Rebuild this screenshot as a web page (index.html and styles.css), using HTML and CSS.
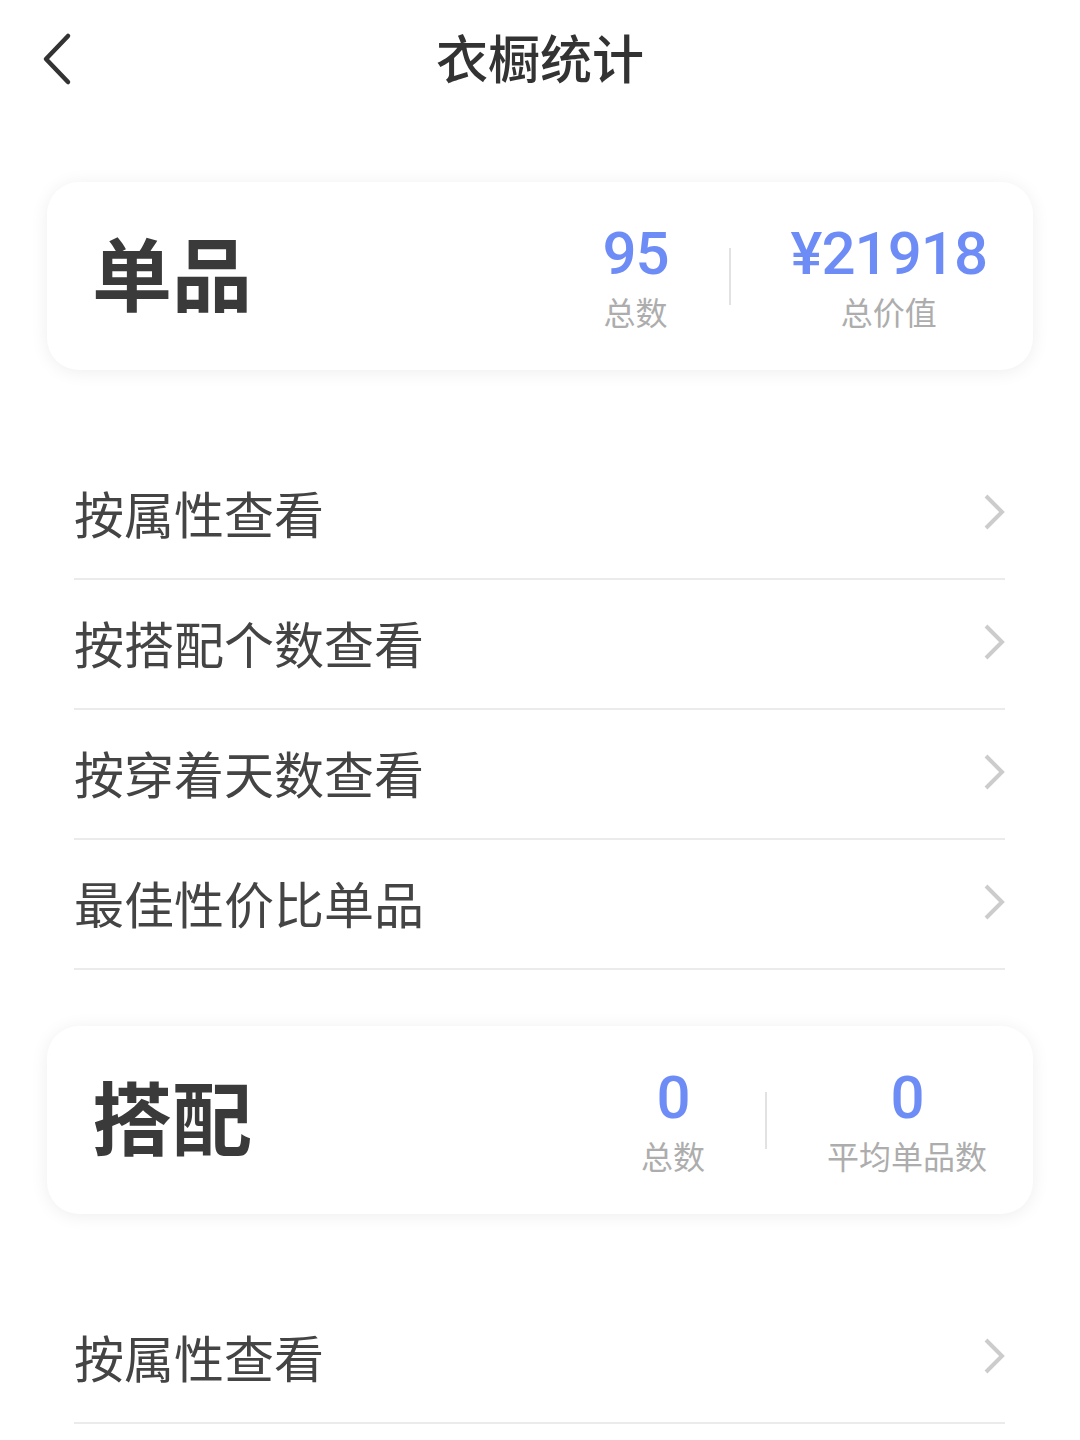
FILE: index.html
```html
<!DOCTYPE html>
<html lang="zh-CN">
<head>
<meta charset="utf-8">
<title>衣橱统计</title>
<link rel="stylesheet" href="styles.css">
</head>
<body>
<header class="header">
  <div class="back">
    <svg width="34" height="54" viewBox="0 0 34 54"><polyline points="28,4 6,27 28,50" fill="none" stroke="#333" stroke-width="4.5" stroke-linecap="round" stroke-linejoin="round"/></svg>
  </div>
  <h1 class="title">衣橱统计</h1>
  <div></div>
</header>
<main class="page">
  <section class="card">
    <div class="card-title">单品</div>
    <div class="stats">
      <div class="stat"><div class="num">95</div><div class="label">总数</div></div>
      <div class="sep"></div>
      <div class="stat"><div class="num">¥21918</div><div class="label">总价值</div></div>
    </div>
  </section>
  <ul class="list">
    <li class="row"><span>按属性查看</span><svg class="chev" width="26" height="40" viewBox="0 0 26 40"><polyline points="5,4 21,20 5,36" fill="none" stroke="#cccccc" stroke-width="4"/></svg></li>
    <li class="row"><span>按搭配个数查看</span><svg class="chev" width="26" height="40" viewBox="0 0 26 40"><polyline points="5,4 21,20 5,36" fill="none" stroke="#cccccc" stroke-width="4"/></svg></li>
    <li class="row"><span>按穿着天数查看</span><svg class="chev" width="26" height="40" viewBox="0 0 26 40"><polyline points="5,4 21,20 5,36" fill="none" stroke="#cccccc" stroke-width="4"/></svg></li>
    <li class="row"><span>最佳性价比单品</span><svg class="chev" width="26" height="40" viewBox="0 0 26 40"><polyline points="5,4 21,20 5,36" fill="none" stroke="#cccccc" stroke-width="4"/></svg></li>
  </ul>
  <section class="card card2">
    <div class="card-title">搭配</div>
    <div class="stats">
      <div class="stat"><div class="num">0</div><div class="label">总数</div></div>
      <div class="sep"></div>
      <div class="stat"><div class="num">0</div><div class="label">平均单品数</div></div>
    </div>
  </section>
  <ul class="list">
    <li class="row"><span>按属性查看</span><svg class="chev" width="26" height="40" viewBox="0 0 26 40"><polyline points="5,4 21,20 5,36" fill="none" stroke="#cccccc" stroke-width="4"/></svg></li>
  </ul>
</main>
</body>
</html>
```

FILE: styles.css
```css
* { box-sizing: border-box; }
html, body { margin: 0; padding: 0; background: #ffffff; }
body {
  font-family: "Noto Sans CJK SC", "Noto Sans", sans-serif;
  color: #333;
  width: 1080px;
  overflow: hidden;
}
.header {
  height: 120px;
  display: grid;
  grid-template-columns: 1fr auto 1fr;
  align-items: center;
}
.back {
  padding-left: 40px;
  display: flex;
  align-items: center;
  padding-bottom: 2px;
}
.title {
  margin: 0;
  font-size: 52px;
  font-weight: 500;
  color: #333;
  line-height: 1;
  padding-bottom: 6px;
}
.page {
  padding: 0 47px;
}
.card {
  margin-top: 62px;
  height: 188px;
  background: #fff;
  border-radius: 32px;
  box-shadow: 0 2px 18px rgba(0, 0, 0, 0.07);
  padding: 0 46px 0 48px;
  display: flex;
  align-items: center;
  justify-content: space-between;
}
.card2 { margin-top: 56px; }
.card-title {
  font-size: 80px;
  font-weight: 700;
  color: #3a3a3a;
  line-height: 1;
  padding-bottom: 12px;
  margin-left: -3px;
}
.stats {
  display: flex;
  align-items: center;
}
.stat {
  display: flex;
  flex-direction: column;
  align-items: center;
}
.stat:first-child { padding-right: 60px; }
.stat:last-child { padding-left: 60px; }
.num {
  font-family: Roboto, "Liberation Sans", Arial, sans-serif;
  font-weight: 500;
  font-size: 60px;
  letter-spacing: -1px;
  color: #6e8cf6;
  line-height: 66px;
}
.label {
  font-size: 32px;
  color: #adadad;
  line-height: 40px;
  margin-top: 4px;
}
.sep {
  width: 2px;
  height: 57px;
  background: #e2e2e2;
}
.list {
  list-style: none;
  margin: 80px 0 0 0;
  padding: 0 28px 0 27px;
}
.row {
  height: 130px;
  border-bottom: 2px solid #ebebeb;
  display: flex;
  align-items: center;
  justify-content: space-between;
  font-size: 50px;
  color: #444;
  padding-bottom: 5px;
}
.row span { line-height: 1; }
.chev { margin-right: -2px; }
```
